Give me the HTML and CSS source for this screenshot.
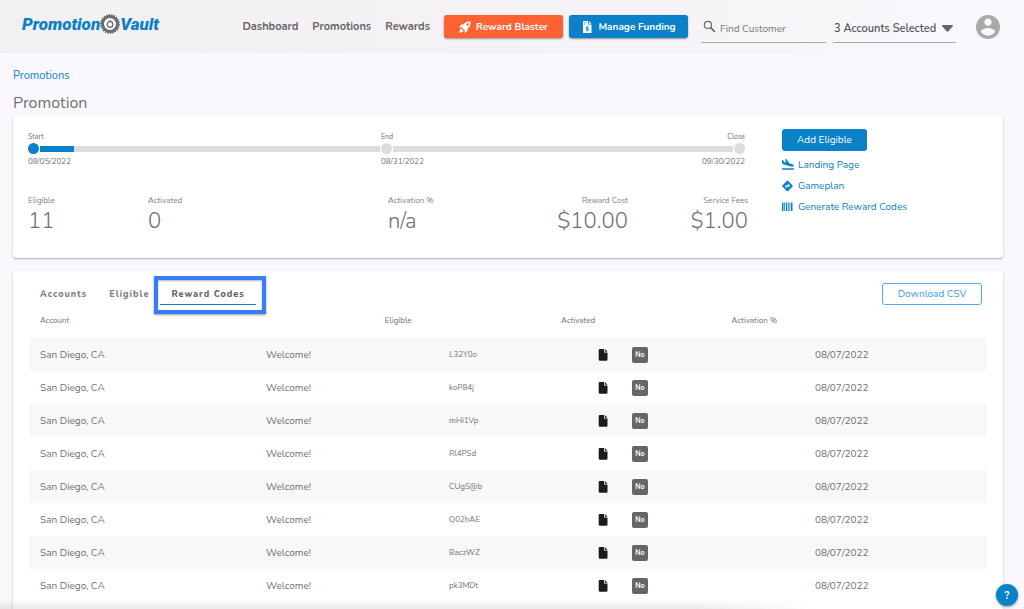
FILE: index.html
```
<!DOCTYPE html>
<html lang="en">

<head>
    <meta charset="UTF-8">
    <meta name="viewport" content="width=device-width, initial-scale=1.0">
    <title>Promotion Vault</title>
    <link rel="stylesheet" href="styles.css">
</head>

<body>
    <header class="topbar">
        <a class="logo" href="#">
            <span>Promotion</span>
            <svg viewBox="0 0 20 20" aria-hidden="true">
                <circle cx="10" cy="10" r="7.500" fill="#fff" stroke="#6a6c6d" stroke-width="3" />
                <circle cx="10" cy="10" r="9.200" fill="none" stroke="#5f6163" stroke-width="1.200" stroke-dasharray="1.600 1" />
                <circle cx="10" cy="10.500" r="2.800" fill="none" stroke="#5f6163" stroke-width="1.200" />
                <path d="M10 6v2" stroke="#5f6163" stroke-width="1.200" />
            </svg>
            <span>Vault</span>
        </a>
        <nav class="nav">
            <a href="#">Dashboard</a>
            <a href="#">Promotions</a>
            <a href="#">Rewards</a>
        </nav>
        <div class="actions">
            <button class="btn btn-orange">
                <svg viewBox="0 0 24 24" aria-hidden="true">
                    <path fill="#fff" d="M23 1c-6-1-11 1-14 6H4L0 13l5-.5L11.500 19 11 24l6-4v-5c5-3 7-8 6-14zM17 9.500a2.500 2.500 0 1 1 0-5 2.500 2.500 0 0 1 0 5zM4 15c-2 1-3 4-3 8 4 0 7-1 8-3z" />
                </svg>
                Reward Blaster
            </button>
            <button class="btn btn-blue">
                <svg viewBox="0 0 24 24" aria-hidden="true">
                    <path fill="#fff" d="M4 0h10v7h7v17H4z" />
                    <path fill="#fff" d="M15.500 0 21 5.500h-5.500z" />
                    <path d="M6.500 3.500h4M6.500 6.500h2" stroke="#0b81c8" stroke-width="1.500" />
                    <path d="M15 12.500h-3.500a1.500 1.500 0 0 0 0 3h2a1.500 1.500 0 0 1 0 3H10M12.500 10.500v10" fill="none" stroke="#0b81c8" stroke-width="1.800" />
                </svg>
                Manage Funding
            </button>
        </div>
        <div class="search">
            <label for="customer" aria-label="Find Customer">
                <svg viewBox="0 0 24 24" aria-hidden="true">
                    <circle cx="9" cy="9" r="6.500" fill="none" stroke="#666" stroke-width="2.200" />
                    <path d="M14 14l8 8" stroke="#666" stroke-width="3" />
                </svg>
            </label>
            <input id="customer" type="text" placeholder="Find Customer">
        </div>
        <div class="accounts">
            <select aria-label="Accounts">
                <option>3 Accounts Selected</option>
            </select>
            <svg viewBox="0 0 11 7" aria-hidden="true">
                <path d="M.5 0h10L11 1 6.200 6.500H4.800L0 1z" fill="#666" />
            </svg>
        </div>
        <a class="avatar" href="#" aria-label="Profile">
            <svg viewBox="2 2 20 20" aria-hidden="true">
                <path fill="#a9a9a9" d="M12 2C6.480 2 2 6.480 2 12s4.480 10 10 10 10-4.480 10-10S17.520 2 12 2zm0 3c1.660 0 3 1.340 3 3s-1.340 3-3 3-3-1.340-3-3 1.340-3 3-3zm0 14.200c-2.500 0-4.710-1.280-6-3.220.030-1.990 4-3.080 6-3.080 1.990 0 5.970 1.090 6 3.080-1.290 1.940-3.500 3.220-6 3.220z" />
            </svg>
        </a>
    </header>

    <main class="page">
        <a class="breadcrumb" href="#">Promotions</a>
        <h1>Promotion</h1>

        <section class="card summary">
            <div class="summary-main">
                <div class="timeline">
                    <div class="points labels">
                        <span>Start</span>
                        <span>End</span>
                        <span>Close</span>
                    </div>
                    <div class="track">
                        <i class="dot active"></i>
                        <div class="bar"><div class="fill" style="width: 10%"></div></div>
                        <i class="dot"></i>
                        <div class="bar"></div>
                        <i class="dot"></i>
                    </div>
                    <div class="points dates">
                        <span>08/05/2022</span>
                        <span>08/31/2022</span>
                        <span>09/30/2022</span>
                    </div>
                </div>
                <dl class="stats">
                    <div><dt>Eligible</dt><dd>11</dd></div>
                    <div class="wide"><dt>Activated</dt><dd>0</dd></div>
                    <div><dt>Activation %</dt><dd>n/a</dd></div>
                    <div class="right"><dt>Reward Cost</dt><dd>$10.00</dd></div>
                    <div class="right"><dt>Service Fees</dt><dd>$1.00</dd></div>
                </dl>
            </div>
            <div class="summary-side">
                <button class="btn btn-add">Add Eligible</button>
                <a href="#">
                    <svg viewBox="0 0 24 24" aria-hidden="true">
                        <path fill="#0b81c8" d="M0 18.500h24v3H0zM0 2l2.500.5L4.500 6l4 1L6 0l3 .7 6 8.300 6 1.600c1.800.5 2.800 1.900 2.300 3.400-.4 1.200-1.700 1.700-3.100 1.300L4 11.200c-2.500-.7-4-2-4-4z" />
                    </svg>
                    Landing Page
                </a>
                <a href="#">
                    <svg viewBox="0 0 24 24" aria-hidden="true">
                        <path fill="#0b81c8" d="M10 1.700 .7 11a1.500 1.500 0 0 0 0 2l9.300 9.300a1.500 1.500 0 0 0 2 0l9.300-9.300a1.500 1.500 0 0 0 0-2L12 1.700a1.500 1.500 0 0 0-2 0z" />
                        <path fill="#fff" d="M12 7.500l4.500 4-4.500 3.500V13H9v3H7v-4c0-1 .6-1.600 1.500-1.600H12z" />
                    </svg>
                    Gameplan
                </a>
                <a href="#">
                    <svg viewBox="0 0 24 24" aria-hidden="true">
                        <path fill="#0b81c8" d="M0 3h3v17H0zM4.500 3H6v17H4.500zM7.500 3h3v17h-3zM12 3h1.500v17H12zM15 3h1.500v17H15zM18 3h3v17h-3z" />
                    </svg>
                    Generate Reward Codes
                </a>
            </div>
        </section>

        <section class="card codes">
            <div class="codes-head">
                <div class="tabs">
                    <button class="tab">Accounts</button>
                    <button class="tab">Eligible</button>
                    <button class="tab selected">Reward Codes</button>
                </div>
                <button class="btn btn-outline">Download CSV</button>
            </div>
            <table>
                <colgroup>
                    <col class="c1"><col class="c2"><col class="c3"><col class="c4"><col class="c5">
                    <col class="c6"><col class="c7"><col class="c8"><col>
                </colgroup>
                <thead>
                    <tr>
                        <th colspan="2">Account</th>
                        <th colspan="2">Eligible</th>
                        <th colspan="3">Activated</th>
                        <th colspan="2">Activation %</th>
                    </tr>
                </thead>
                <tbody id="rows"></tbody>
            </table>
        </section>
    </main>

    <button class="help" aria-label="Help">?</button>
    <div class="fade"></div>

    <script src="script.js"></script>
</body>

</html>
```
FILE: styles.css
```
* {
    box-sizing: border-box;
    margin: 0;
    padding: 0;
}

body {
    min-height: 100vh;
    display: flex;
    flex-direction: column;
    background-color: #faf8fc;
    color: #707070;
    font-family: Nunito, Lato, sans-serif;
    font-size: 10px;
}

a {
    color: #0b81c8;
    text-decoration: none;
}

button,
input,
select {
    font-family: inherit;
    border: none;
    background: none;
}

button {
    cursor: pointer;
}

/* top bar */
.topbar {
    height: 53px;
    display: flex;
    align-items: center;
    padding: 0 24px 0 22px;
    background: linear-gradient(to right, #f2f0f3, #f4f2f5 50%, #faf8fc);
}

.logo {
    display: flex;
    align-items: center;
    height: 26px;
    margin-bottom: 6px;
    font-family: Roboto, sans-serif;
    font-size: 17px;
    font-weight: 900;
    font-style: italic;
}

.logo svg {
    width: 20px;
    height: 20px;
}

.nav {
    display: flex;
    gap: 14px;
    margin-left: auto;
}

.nav a {
    color: #666;
    font-size: 11px;
    font-weight: 700;
}

.actions {
    display: flex;
    gap: 6px;
    margin: 0 13px 0 14px;
}

.btn {
    display: flex;
    align-items: center;
    justify-content: center;
    height: 23px;
    border-radius: 3px;
    color: #fff;
    font-size: 10px;
}

.btn svg {
    width: 12px;
    height: 12px;
    margin-right: 5px;
}

.btn-orange,
.btn-blue {
    width: 119px;
    font-weight: 700;
    background-color: #fe6232;
    box-shadow: 0 1px 2px rgba(0, 0, 0, .4);
}

.btn-blue {
    background-color: #0b81c8;
}

.search {
    display: flex;
    align-items: center;
    width: 125px;
    height: 27px;
    margin-top: 5px;
    border-bottom: 1px solid #aaa;
}

.search svg {
    display: block;
    width: 13px;
    height: 13px;
    margin: 0 4px 5px 2px;
}

.search input {
    width: 100%;
    min-width: 0;
    color: #666;
    font-size: 10px;
    outline: none;
}

.search input::placeholder {
    color: #777;
}

.accounts {
    display: flex;
    align-items: center;
    width: 123px;
    height: 27px;
    margin: 5px 20px 0 7px;
    border-bottom: 1px solid #aaa;
}

.accounts select {
    flex: 1;
    min-width: 0;
    padding-left: 1px;
    appearance: none;
    color: #555;
    font-size: 11px;
    font-weight: 600;
}

.accounts svg {
    width: 11px;
    height: 7px;
    margin-right: 3px;
}

.avatar svg {
    display: block;
    width: 24px;
    height: 24px;
}

/* page */
.page {
    flex: 1;
    display: flex;
    flex-direction: column;
    padding: 15px 21px 0 13px;
}

.breadcrumb {
    font-size: 11px;
    line-height: 15px;
}

h1 {
    margin: 10px 0 1px;
    font-size: 16px;
    line-height: 21px;
    font-weight: 400;
}

.card {
    background-color: #fff;
    border-radius: 3px;
    box-shadow: 0 1px 2px rgba(0, 0, 0, .3);
}

/* summary */
.summary {
    display: flex;
    height: 143px;
    padding: 14px 15px;
}

.summary-main {
    width: 75%;
}

.timeline {
    padding: 2px 3px 0 0;
}

.points {
    display: grid;
    grid-template-columns: 353fr 182fr 182fr;
}

.points span:last-child {
    text-align: right;
}

.labels {
    font-size: 7px;
    line-height: 12px;
}

.dates {
    font-size: 8px;
    line-height: 15px;
}

.track {
    display: flex;
    align-items: center;
    gap: 1px;
}

.dot {
    width: 11px;
    height: 11px;
    border-radius: 50%;
    background-color: #dcdcde;
}

.dot.active,
.fill {
    background-color: #0b81c8;
}

.bar {
    flex: 1;
    height: 6px;
    background-color: #dcdcde;
}

.fill {
    height: 100%;
}

.stats {
    display: grid;
    grid-template-columns: repeat(6, 1fr);
    margin-top: 26px;
}

.stats .wide {
    grid-column: span 2;
}

.stats .right {
    text-align: right;
}

.stats dt {
    color: #808080;
    font-size: 8px;
    line-height: 12px;
}

.stats dd {
    font-size: 22px;
    line-height: 28px;
    font-weight: 300;
}

.summary-side {
    display: flex;
    flex-direction: column;
    align-items: flex-start;
    padding-left: 34px;
}

.btn-add {
    width: 85px;
    height: 22px;
    margin-bottom: 3px;
    background-color: #0b81c8;
}

.summary-side a {
    display: flex;
    align-items: center;
    height: 21px;
}

.summary-side a svg {
    width: 12px;
    height: 12px;
    margin-right: 4px;
}

/* reward codes */
.codes {
    flex: 1;
    margin-top: 13px;
    padding: 12px 16px 0;
    border-radius: 3px 3px 0 0;
}

.codes-head {
    display: flex;
    justify-content: space-between;
    align-items: flex-start;
    padding-right: 5px;
}

.tabs {
    display: flex;
}

.tab {
    height: 22px;
    padding: 0 11px;
    color: #808080;
    font-size: 9px;
    font-weight: 800;
    letter-spacing: 1px;
}

.tab.selected {
    position: relative;
    color: #666;
    box-shadow: inset 0 -1px #0b81c8;
}

/* highlight frame around the open tab */
.tab.selected::after {
    content: "";
    position: absolute;
    inset: -7px -10px -9px -6px;
    border: 4px solid #377df6;
    box-shadow: 0 1px 2px rgba(0, 0, 0, .4), inset 0 1px 2px rgba(0, 0, 0, .3);
}

.btn-outline {
    width: 100px;
    height: 22px;
    border: 1px solid #55aaf5;
    color: #3c9bee;
}

table {
    width: 100%;
    table-layout: fixed;
    border-collapse: collapse;
}

.c1 { width: 23.6%; }
.c2 { width: 12.4%; }
.c3 { width: 6.7%; }
.c4 { width: 11.7%; }
.c5 { width: 3.9%; }
.c6 { width: 3.5%; }
.c7 { width: 10.4%; }
.c8 { width: 8.7%; }

th {
    height: 33px;
    padding: 0 11px 2px;
    font-size: 8px;
    font-weight: 400;
    text-align: left;
}

td {
    height: 33px;
    padding: 0 11px;
}

tbody tr:nth-child(odd) {
    background-color: #f8f8f8;
}

.code {
    font-size: 8px;
}

.copy {
    display: block;
    width: 10px;
    height: 12px;
}

.copy svg {
    display: block;
    width: 10px;
    height: 12px;
}

.badge {
    display: block;
    width: 16px;
    height: 16px;
    border-radius: 2px;
    background-color: #666;
    color: #fff;
    font-size: 7px;
    line-height: 16px;
    font-weight: 700;
    text-align: center;
}

/* floating over the page */
.help {
    position: fixed;
    right: 6px;
    bottom: 3px;
    width: 22px;
    height: 22px;
    border-radius: 50%;
    background-color: #0b81c8;
    box-shadow: 0 1px 3px rgba(0, 0, 0, .4);
    color: #fff;
    font-size: 11px;
    font-weight: 700;
}

.fade {
    position: fixed;
    left: 0;
    right: 20%;
    bottom: 0;
    height: 10px;
    background: linear-gradient(to bottom, transparent, rgba(0, 0, 0, .08));
    -webkit-mask-image: linear-gradient(to right, #000 85%, transparent);
    pointer-events: none;
}
```
FILE: script.js
```
const codes = ["L32Y0o", "koP84j", "mHi1Vp", "Rl4PSd", "CUgS@b", "Q02hAE", "BaczWZ", "pk3MDt"];

document.getElementById("rows").innerHTML = codes.map((code) => `
    <tr>
        <td>San Diego, CA</td>
        <td colspan="2">Welcome!</td>
        <td colspan="2" class="code">${code}</td>
        <td>
            <button class="copy" aria-label="Copy code">
                <svg viewBox="0 0 10 12"><path fill="#1c1c1c" d="M2 0h4v3.500h3.500V10.500a1.300 1.300 0 0 1-1.300 1.300H2A1.300 1.300 0 0 1 .7 10.500v-9A1.300 1.300 0 0 1 2 0zM6.800 0 9.500 2.700H6.800z"/></svg>
            </button>
        </td>
        <td colspan="2"><span class="badge">No</span></td>
        <td>08/07/2022</td>
    </tr>`).join("");
```
